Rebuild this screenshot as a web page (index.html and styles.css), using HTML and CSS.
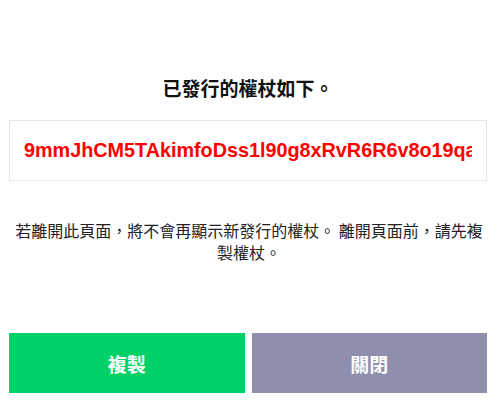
FILE: index.html
```html
<!DOCTYPE html>
<html lang="zh-Hant">
<head>
<meta charset="utf-8">
<link rel="stylesheet" href="styles.css">
</head>
<body>
<div class="page">
  <h1 class="title">已發行的權杖如下。</h1>
  <div class="token-box"><span class="token">9mmJhCM5TAkimfoDss1l90g8xRvR6R6v8o19qaWnQ3kJxYbPzT2uLk</span></div>
  <p class="notice">若離開此頁面，將不會再顯示新發行的權杖。 離開頁面前，請先複製權杖。</p>
  <div class="actions">
    <button class="btn btn-copy">複製</button>
    <button class="btn btn-close">關閉</button>
  </div>
</div>
</body>
</html>
```
FILE: styles.css
```css
html, body {
  margin: 0;
  padding: 0;
  background: #fff;
}
.page {
  display: flex;
  flex-direction: column;
  padding: 0 10px 0 9px;
  font-family: "Noto Sans CJK TC", "Noto Sans", sans-serif;
  color: #111;
}
.title {
  margin: 75px 0 0;
  font-size: 19px;
  line-height: 26px;
  font-weight: 700;
  text-align: center;
}
.token-box {
  margin-top: 19px;
  height: 59px;
  border: 1px solid #e6e6e6;
  display: flex;
  align-items: center;
  padding: 0 14px;
  overflow: hidden;
}
.token {
  display: block;
  overflow: hidden;
  white-space: nowrap;
  font-family: "Liberation Sans", Arial, sans-serif;
  font-weight: 700;
  font-size: 19.8px;
  color: #ff0000;
}
.notice {
  margin: 38px 0 0;
  padding: 0 1px 0 3px;
  font-size: 16px;
  line-height: 22px;
  text-align: center;
  color: #222;
}
.actions {
  margin-top: 70px;
  display: flex;
  gap: 7px;
}
.btn {
  flex: 1;
  height: 60px;
  border: none;
  margin: 0;
  padding: 0;
  color: #fff;
  font-family: "Noto Sans CJK TC", sans-serif;
  font-size: 19px;
  font-weight: 700;
}
.btn-copy {
  background: #00d166;
}
.btn-close {
  background: #8f8fad;
}
```
